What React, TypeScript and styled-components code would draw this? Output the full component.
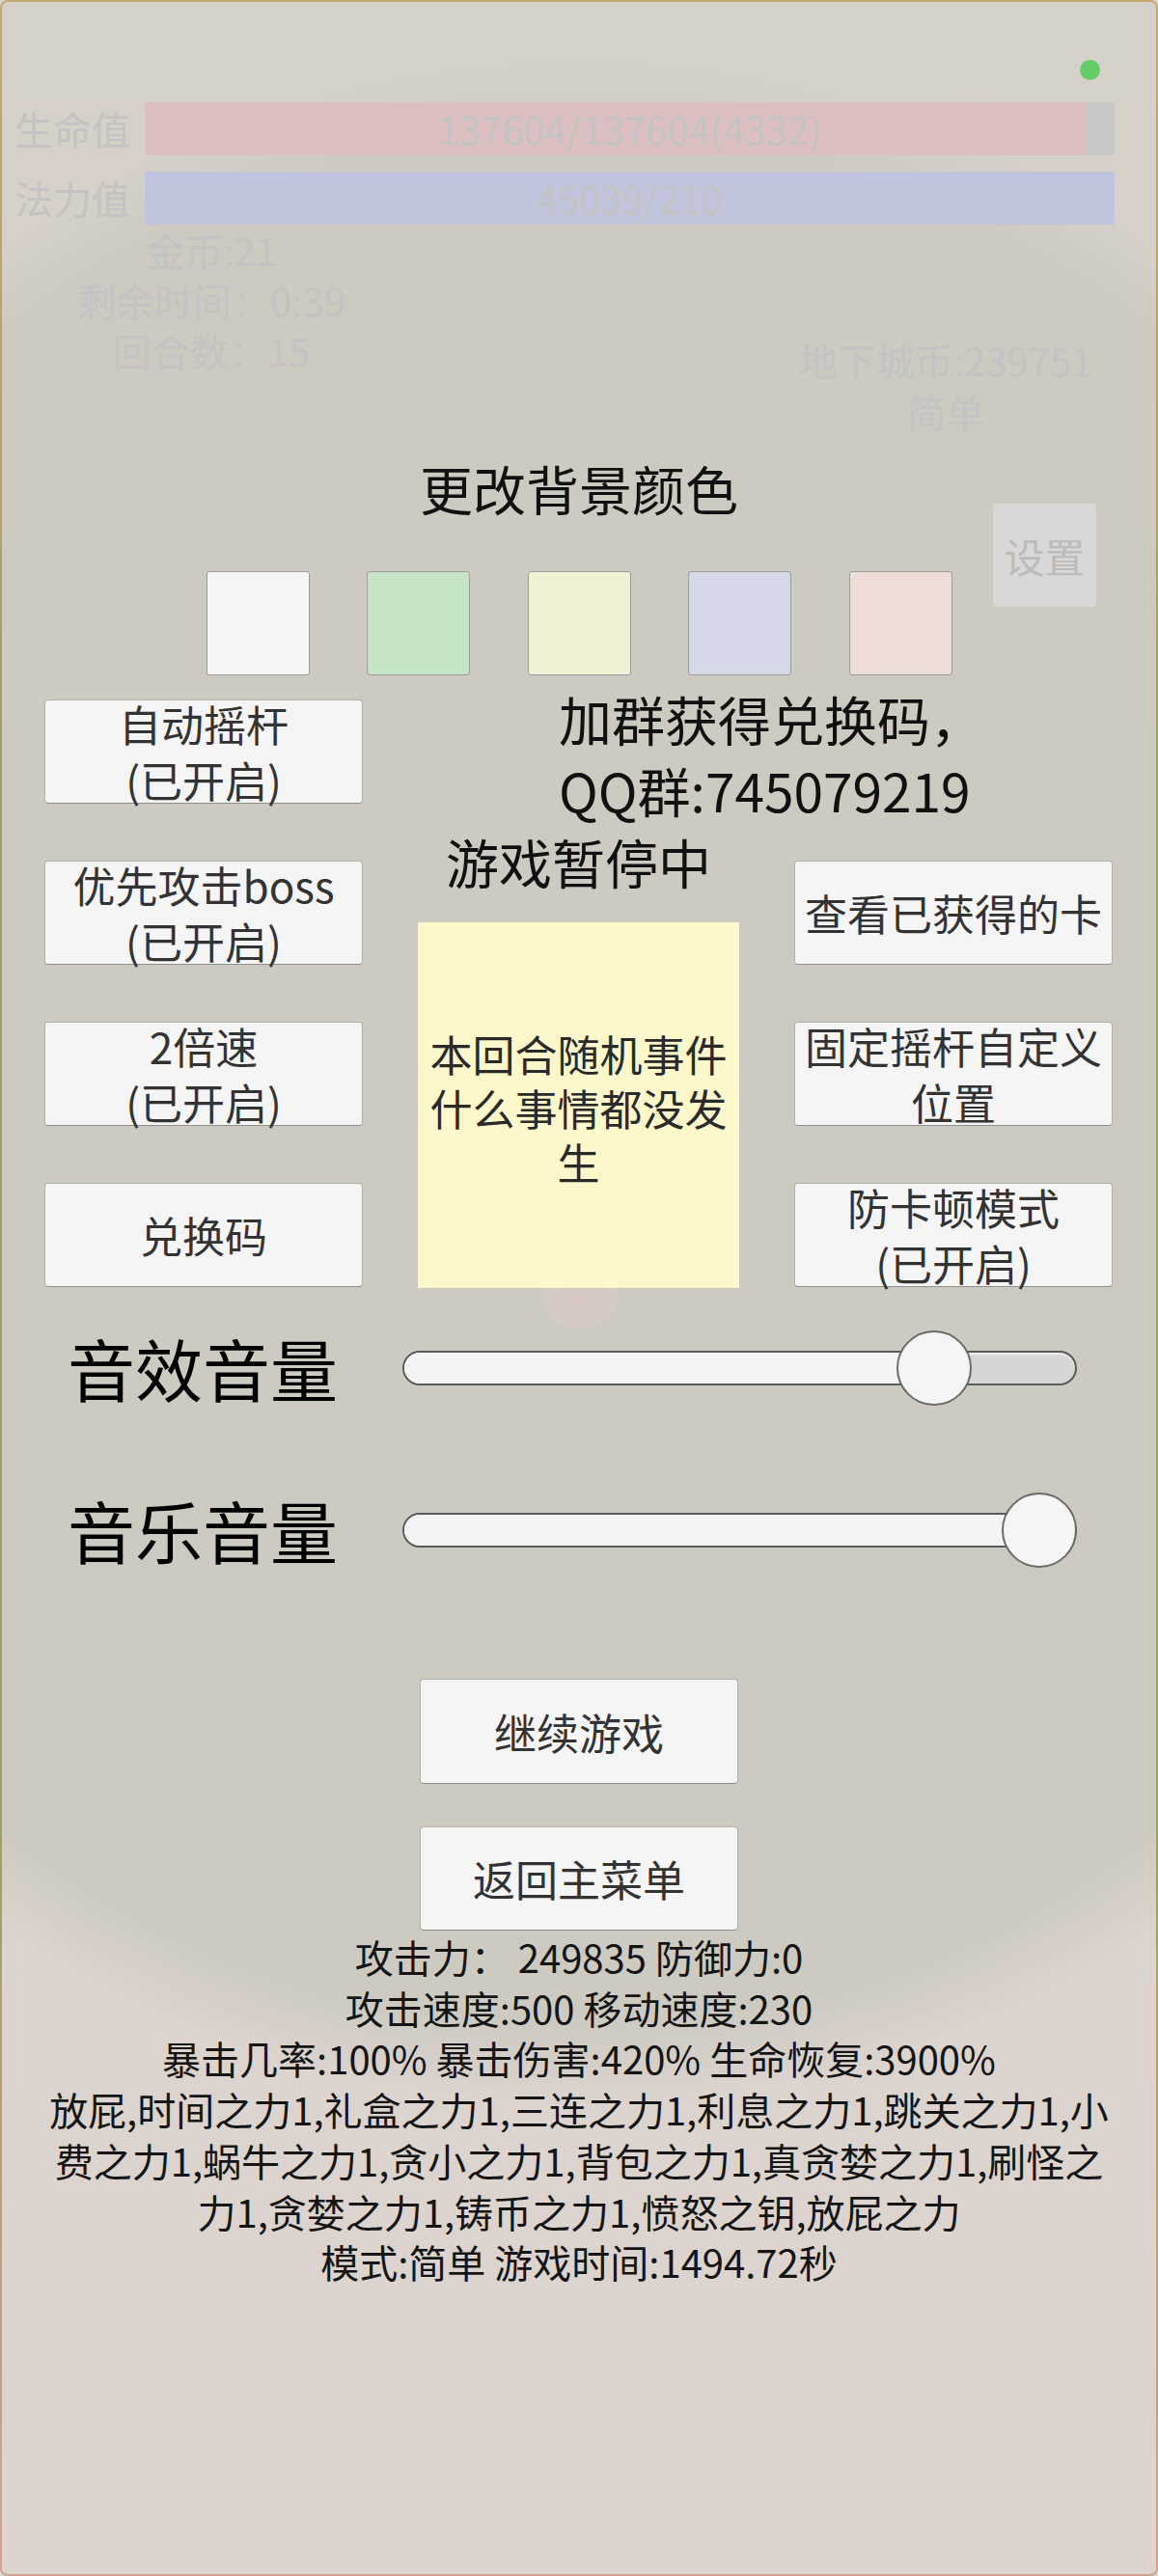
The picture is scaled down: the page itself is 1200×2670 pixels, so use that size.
import React from 'react';
import styled, { createGlobalStyle } from 'styled-components';

const GlobalStyle = createGlobalStyle`
  html, body {
    margin: 0;
    padding: 0;
  }
  body {
    font-family: "Noto Sans CJK SC", "Noto Sans", sans-serif;
    background: #dcd4ce;
  }
  * {
    box-sizing: border-box;
  }
`;

const Frame = styled.div`
  width: 1200px;
  height: 2670px;
  padding: 2px;
  border-radius: 8px;
  background: linear-gradient(to bottom, #c6a86f 0%, #a49e63 30%, #a49e63 72%, #d2a18e 100%);
`;

const Screen = styled.div`
  position: relative;
  height: 100%;
  border-radius: 6px;
  overflow: hidden;
  background:
    radial-gradient(circle 1060px at 598px 1120px, #cdcac2 0%, #cdcac2 92%, rgba(205, 202, 194, 0) 100%),
    linear-gradient(to bottom, #d6d1c8 0%, #dbd3cd 55%, #ddd4cf 100%);
`;

/* ---------- faded game hud ---------- */

const Hud = styled.div`
  padding-top: 60px;
  color: #c4c3c4;
  font-size: 40px;
`;

const StatusDot = styled.div`
  width: 21px;
  height: 21px;
  margin-left: 1117px;
  border-radius: 50%;
  background: #66cc6a;
`;

const BarRow = styled.div<{ $gap: number }>`
  display: flex;
  align-items: center;
  height: 55px;
  margin-top: ${(p) => p.$gap}px;
`;

const BarLabel = styled.div`
  width: 148px;
  padding-left: 13px;
  line-height: 55px;
`;

const Bar = styled.div<{ $track: string }>`
  position: relative;
  width: 1005px;
  height: 55px;
  background: ${(p) => p.$track};
`;

const BarFill = styled.div<{ $color: string }>`
  height: 100%;
  background: ${(p) => p.$color};
`;

const BarText = styled.div`
  position: absolute;
  inset: 0;
  text-align: center;
  line-height: 55px;
`;

const InfoArea = styled.div`
  display: flex;
  justify-content: space-between;
`;

const InfoLeft = styled.div`
  width: 434px;
  text-align: center;
  line-height: 52px;
`;

const InfoRight = styled.div`
  display: flex;
  flex-direction: column;
  align-items: center;
  width: 400px;
  margin-top: 114px;
  margin-right: 18px;
  line-height: 53px;
`;

const SettingsButton = styled.div`
  align-self: flex-end;
  width: 107px;
  height: 107px;
  margin-top: 69px;
  margin-right: 44px;
  border-radius: 4px;
  background: #d9d8d6;
  color: #bdbcbc;
  font-size: 42px;
  line-height: 107px;
  text-align: center;
`;

const Sprite = styled.div`
  position: absolute;
  left: 560px;
  top: 1298px;
  width: 78px;
  height: 78px;
  border-radius: 50%;
  background: radial-gradient(circle at 50% 60%, #d6c7c2 0%, #d5cac5 60%, #d1cac4 100%);
`;

/* ---------- pause menu overlay ---------- */

const Overlay = styled.div`
  position: absolute;
  inset: 0;
  display: flex;
  flex-direction: column;
  align-items: center;
  padding-top: 468px;
  color: #111;
`;

const Title = styled.div`
  font-size: 55px;
  line-height: 70px;
`;

const SwatchRow = styled.div`
  display: flex;
  gap: 59.5px;
  margin-top: 52px;
`;

const Swatch = styled.div<{ $color: string }>`
  width: 107px;
  height: 108px;
  border: 1px solid #9c9c9a;
  border-radius: 3px;
  background: ${(p) => p.$color};
`;

const MenuColumns = styled.div`
  display: flex;
  align-self: stretch;
  align-items: flex-start;
  gap: 57px;
  margin-top: 25px;
  padding-left: 44px;
`;

const SideColumn = styled.div<{ $offset?: number }>`
  display: flex;
  flex-direction: column;
  gap: 59px;
  width: 330px;
  margin-top: ${(p) => p.$offset ?? 0}px;
`;

const CenterColumn = styled.div`
  display: flex;
  flex-direction: column;
  width: 333px;
  margin-top: -18px;
`;

const GroupNotice = styled.div`
  padding-left: 146px;
  font-size: 55px;
  line-height: 74px;
  white-space: nowrap;
`;

const PausedText = styled.div`
  font-size: 55px;
  line-height: 74px;
  text-align: center;
  white-space: nowrap;
`;

const EventBox = styled.div`
  display: flex;
  align-items: center;
  justify-content: center;
  height: 379px;
  margin-top: 27px;
  padding: 4px 8px 0;
  background: #fcf8cb;
  color: #2a2a2a;
  font-size: 44px;
  line-height: 56px;
  text-align: center;
`;

const MenuButton = styled.div<{ $height?: number }>`
  display: flex;
  align-items: center;
  justify-content: center;
  width: 330px;
  height: ${(p) => p.$height ?? 108}px;
  padding: 0 6px;
  border: 1px solid #b0b0ae;
  border-bottom-color: #8f8f8d;
  border-radius: 4px;
  background: #f5f5f5;
  color: #333;
  font-size: 44px;
  line-height: 58px;
  text-align: center;
`;

const SliderRow = styled.div<{ $gap: number }>`
  display: flex;
  align-self: stretch;
  align-items: center;
  height: 78px;
  margin-top: ${(p) => p.$gap}px;
  padding-left: 68px;
`;

const SliderLabel = styled.div`
  width: 347px;
  color: #000;
  font-size: 70px;
  line-height: 78px;
`;

const Track = styled.div`
  position: relative;
  width: 699px;
  height: 36px;
  border: 2px solid #5a5a58;
  border-radius: 18px;
  background: #d6d6d6;
  box-shadow: inset 0 2px 2px rgba(255, 255, 255, 0.6);
`;

const TrackFill = styled.div`
  height: 100%;
  border-radius: 16px 0 0 16px;
  background: #f4f4f4;
`;

const Thumb = styled.div`
  position: absolute;
  top: -23px;
  width: 78px;
  height: 78px;
  border: 2px solid #6a6a68;
  border-radius: 50%;
  background: #f5f5f5;
`;

const BottomButtons = styled.div`
  display: flex;
  flex-direction: column;
  gap: 44px;
  margin-top: 115px;
`;

const Stats = styled.div`
  width: 1112px;
  margin-top: 1px;
  color: #151515;
  font-size: 40px;
  line-height: 52.7px;
  text-align: center;
`;

function VolumeSlider({ label, value, gap }: { label: string; value: number; gap: number }) {
  const travel = 699 - 78;
  const left = Math.round(travel * value) - 2;
  return (
    <SliderRow $gap={gap}>
      <SliderLabel>{label}</SliderLabel>
      <Track>
        <TrackFill style={{ width: left + 39 }} />
        <Thumb style={{ left }} />
      </Track>
    </SliderRow>
  );
}

const swatches = ['#f5f5f5', '#c6e3c5', '#f1f1d6', '#d5d8e6', '#eeddd6'];

const cards =
  '放屁,时间之力1,礼盒之力1,三连之力1,利息之力1,跳关之力1,小费之力1,蜗牛之力1,贪小之力1,背包之力1,真贪婪之力1,刷怪之力1,贪婪之力1,铸币之力1,愤怒之钥,放屁之力';

export default function App() {
  const hp = 137604;
  const hpMax = 137604;
  return (
    <>
      <GlobalStyle />
      <Frame>
        <Screen>
          <Hud>
            <StatusDot />
            <BarRow $gap={23}>
              <BarLabel>生命值</BarLabel>
              <Bar $track="#c8c8c8">
                <BarFill $color="#dcbfc0" style={{ width: `${(hp / hpMax) * 97}%` }} />
                <BarText>137604/137604(4332)</BarText>
              </Bar>
            </BarRow>
            <BarRow $gap={17}>
              <BarLabel>法力值</BarLabel>
              <Bar $track="#c1c4dd">
                <BarText>45039/210</BarText>
              </Bar>
            </BarRow>
            <InfoArea>
              <InfoLeft>
                <div>金币:21</div>
                <div>剩余时间：0:39</div>
                <div>回合数：15</div>
              </InfoLeft>
              <InfoRight>
                <div>地下城币:239751</div>
                <div>简单</div>
                <SettingsButton>设置</SettingsButton>
              </InfoRight>
            </InfoArea>
            <Sprite />
          </Hud>

          <Overlay>
            <Title>更改背景颜色</Title>
            <SwatchRow>
              {swatches.map((c) => (
                <Swatch key={c} $color={c} />
              ))}
            </SwatchRow>

            <MenuColumns>
              <SideColumn>
                <MenuButton>
                  自动摇杆
                  <br />
                  (已开启)
                </MenuButton>
                <MenuButton>
                  优先攻击boss
                  <br />
                  (已开启)
                </MenuButton>
                <MenuButton>
                  2倍速
                  <br />
                  (已开启)
                </MenuButton>
                <MenuButton>兑换码</MenuButton>
              </SideColumn>

              <CenterColumn>
                <GroupNotice>
                  加群获得兑换码，
                  <br />
                  QQ群:745079219
                </GroupNotice>
                <PausedText>游戏暂停中</PausedText>
                <EventBox>本回合随机事件什么事情都没发生</EventBox>
              </CenterColumn>

              <SideColumn $offset={167}>
                <MenuButton>查看已获得的卡</MenuButton>
                <MenuButton>固定摇杆自定义位置</MenuButton>
                <MenuButton>
                  防卡顿模式
                  <br />
                  (已开启)
                </MenuButton>
              </SideColumn>
            </MenuColumns>

            <VolumeSlider label="音效音量" value={0.825} gap={44} />
            <VolumeSlider label="音乐音量" value={1} gap={90} />

            <BottomButtons>
              <MenuButton $height={109}>继续游戏</MenuButton>
              <MenuButton>返回主菜单</MenuButton>
            </BottomButtons>

            <Stats>
              <div>攻击力： 249835 防御力:0</div>
              <div>攻击速度:500 移动速度:230</div>
              <div>暴击几率:100% 暴击伤害:420% 生命恢复:3900%</div>
              <div>{cards}</div>
              <div>模式:简单 游戏时间:1494.72秒</div>
            </Stats>
          </Overlay>
        </Screen>
      </Frame>
    </>
  );
}
